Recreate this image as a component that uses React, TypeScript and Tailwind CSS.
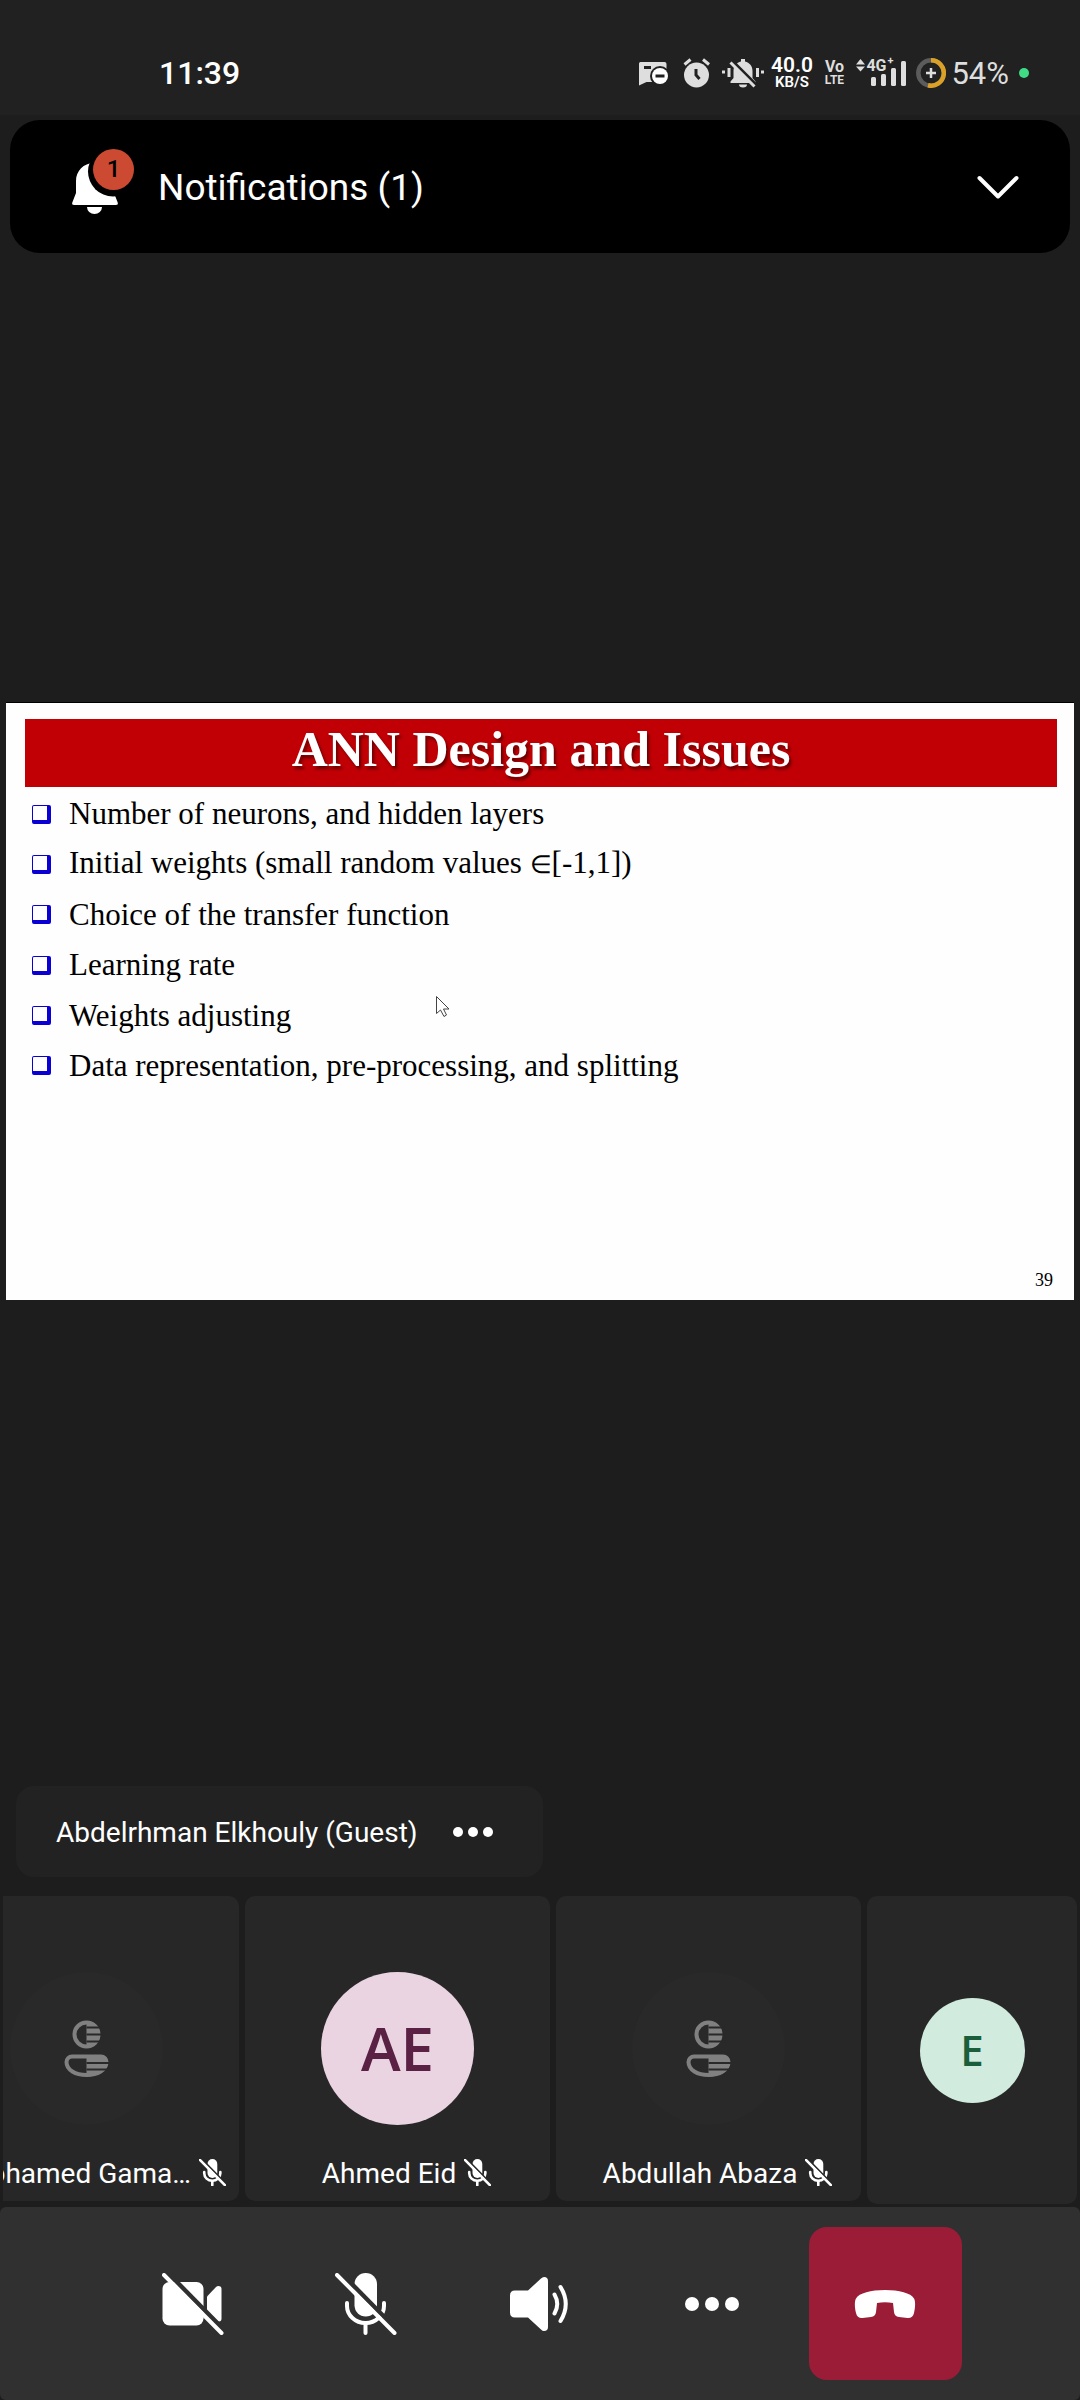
import React from 'react';

const SLIDE_POINTS = [
  'Number of neurons, and hidden layers',
  'Initial weights (small random values ∈[-1,1])',
  'Choice of the transfer function',
  'Learning rate',
  'Weights adjusting',
  'Data representation, pre-processing, and splitting',
];

function StatusIcons() {
  return (
    <div className="flex items-center text-[#dedede]">
      <svg className="mr-[14px] h-[30px] w-[30px]" viewBox="0 0 30 30" fill="currentColor" aria-hidden="true">
        <path d="M1.500 4h24a2 2 0 0 1 2 2v18H7.500L0 27.500V5.500A1.500 1.500 0 0 1 1.500 4z" />
        <rect x="5" y="8" width="7" height="3" fill="#212121" />
        <circle cx="21" cy="18" r="10" fill="#212121" />
        <circle cx="21" cy="18" r="8" fill="#fff" />
        <rect x="16.500" y="16.500" width="9" height="3" fill="#212121" />
      </svg>
      <svg className="mr-[11px] h-[30px] w-[28px]" viewBox="0 0 28 30" aria-hidden="true">
        <circle cx="13.500" cy="17" r="12.500" fill="currentColor" />
        <path d="M1.500 6.500 7.500 1.500M26 6.500l-6-5" stroke="currentColor" strokeWidth="3" />
        <path d="M13 11v6l3.500 4" stroke="#212121" strokeWidth="3" fill="none" />
      </svg>
      <svg className="mr-[7px] h-[30px] w-[42px]" viewBox="0 0 42 30" fill="currentColor" aria-hidden="true">
        <path d="M19 3.500V1h4v2.500c4.500 1 7.500 4.500 7.500 9.500v7l3 3.500V25H8.500v-1.500l3-3.500v-7c0-5 3-8.500 7.500-9.500z" />
        <path d="M17 26.500h8a4 3 0 0 1-8 0z" />
        <path d="M1.500 12.500v3M7 10v9M35.500 10v9M40.500 12.500v3" stroke="currentColor" strokeWidth="3" />
        <path d="M11 3.500l24 24" stroke="#212121" strokeWidth="3" />
        <path d="M8.500 4.500l24 24" stroke="currentColor" strokeWidth="3" />
      </svg>
      <div className="mr-3 flex w-[41px] flex-col items-center text-white">
        <span className="text-[21px] font-semibold leading-[19px]">40.0</span>
        <span className="text-[15px] font-semibold leading-[15px]">KB/S</span>
      </div>
      <div className="mr-[11px] flex w-[20px] flex-col items-center font-bold">
        <span className="text-[16px] leading-[14px]">Vo</span>
        <span className="text-[12px] leading-[12px]">LTE</span>
      </div>
      <div className="relative mr-2 h-[30px] w-[53px]">
        <svg className="h-full w-full" viewBox="0 0 53 30" fill="currentColor" aria-hidden="true">
          <path d="M1 6.500 5.500 1 10 6.500zM1 8.500l4.500 5L10 8.500z" />
          <rect x="16" y="19" width="5" height="9" rx="1.500" />
          <rect x="26" y="16" width="5" height="12" rx="1.500" />
          <rect x="36" y="10" width="5" height="18" rx="1.500" />
          <rect x="46" y="3" width="5" height="25" rx="1.500" />
        </svg>
        <span className="absolute left-[11px] top-0 text-[16px] font-bold leading-[16px]">4G</span>
        <span className="absolute left-[32px] top-[-3px] text-[11px] font-bold leading-[11px]">+</span>
      </div>
      <svg className="mr-[5px] h-[30px] w-[30px]" viewBox="0 0 30 30" fill="none" aria-hidden="true">
        <circle cx="15" cy="15" r="12.700" stroke="#5c5c5c" strokeWidth="4.500" />
        <path d="M15 2.300a12.700 12.700 0 1 1-3 25" stroke="#dba126" strokeWidth="4.500" />
        <path d="M15 10v10M10 15h10" stroke="#dedede" strokeWidth="2.500" />
      </svg>
      <span className="text-[31px] leading-[31px]">54%</span>
      <span className="ml-[10px] h-[10px] w-[10px] rounded-full bg-[#3fdc85]" />
    </div>
  );
}

function MicOff({ className, weight = 4 }: { className: string; weight?: number }) {
  return (
    <svg className={className} viewBox="0 0 62 62" fill="none" aria-hidden="true">
      <rect x="19.500" y="0" width="22.500" height="43.500" rx="11.200" fill="#fff" />
      <path d="M12 30v3a18.500 17 0 0 0 37 0v-3" stroke="#fff" strokeWidth={weight} strokeLinecap="round" />
      <path d="M30.500 51v9" stroke="#fff" strokeWidth={weight} strokeLinecap="round" />
      <path d="M7.500 1.500 65 60" className="stroke-(--surface)" strokeWidth="4.500" />
      <path d="M2 2 59.500 60" stroke="#fff" strokeWidth={weight} strokeLinecap="round" />
    </svg>
  );
}

function PersonGlyph() {
  return (
    <svg className="h-[57px] w-[45px]" viewBox="0 0 45 57" fill="none" aria-hidden="true">
      <circle cx="22.500" cy="14.500" r="12" stroke="#808080" strokeWidth="4" />
      <path d="M8 36.500h29a5.500 5.500 0 0 1 5.500 5.500c0 8-9 13-20 13s-20-5-20-13A5.500 5.500 0 0 1 8 36.500z" stroke="#808080" strokeWidth="4" />
      <path d="M22.500 1a13.500 13.500 0 0 1 0 27z" fill="#808080" />
      <path d="M22.500 35H37a7 7 0 0 1 7 7c0 9-10 14.500-21.500 14.500z" fill="#808080" />
      <path d="M22.500 7.500H40M22.500 14.500H40M22.500 21.500H40M22.500 43H45M22.500 49.500H45" stroke="#292929" strokeWidth="2" />
    </svg>
  );
}

function Tile({ name, children }: { name: string; children: React.ReactNode }) {
  return (
    <li className="flex h-[305px] w-[305px] shrink-0 flex-col items-center rounded-[10px] bg-[#272727] pt-[76px] [--surface:#272727]">
      {children}
      <div className="mt-[29px] flex max-w-full items-center gap-2 pl-[18px] text-[28px] leading-[40px] text-white">
        <span className="whitespace-nowrap">{name}</span>
        <MicOff className="mb-1 h-[27px] w-[27px] shrink-0" weight={6} />
      </div>
    </li>
  );
}

const actionClass = 'flex h-[153px] w-[153px] items-center justify-center rounded-[18px]';

export default function App() {
  return (
    <div className="flex min-h-screen flex-col overflow-hidden bg-[#1d1d1d] font-['Roboto',sans-serif]">
      <header className="flex h-[115px] items-center justify-between bg-[#212121] pl-[159px] pr-[51px] pt-[31px]">
        <time className="text-[32px] font-medium leading-[32px] text-white">11:39</time>
        <StatusIcons />
      </header>

      <button type="button" className="mx-[10px] mt-[5px] flex h-[133px] items-center rounded-[30px] bg-black pl-[61px] pr-[51px] text-white">
        <span className="relative mr-[39px] h-[64px] w-[48px]">
          <svg className="h-full w-full" viewBox="0 0 48 64" fill="#fff" aria-hidden="true">
            <path d="M23 8C12.500 8 5 16 5 26v12L1.300 47.500C.700 49.200 1.600 50 3 50h42c1.400 0 2.300-.800 1.700-2.500L43 38V26C43 16 34 8 23 8z" />
            <path d="M16 52h15a7.500 7 0 0 1-15 0z" />
            <circle cx="42" cy="16.500" r="25" fill="#000" />
          </svg>
          <span className="absolute left-[22px] top-[-6px] flex h-[41px] w-[41px] items-center justify-center rounded-full bg-[#cc4a31] text-[24px] font-medium leading-[24px] text-black">1</span>
        </span>
        <span className="pt-[3px] text-[37px] leading-[48px]">Notifications (1)</span>
        <svg className="ml-auto h-[24px] w-[42px]" viewBox="0 0 42 24" fill="none" stroke="#fff" strokeWidth="4" strokeLinecap="round" strokeLinejoin="round" aria-label="Expand">
          <path d="M2.500 3 21 21.500 39.500 3" />
        </svg>
      </button>

      <main className="flex flex-1 flex-col">
        <section className="relative mx-[6px] mt-[449px] flex h-[598px] flex-col border-t border-black bg-[#fefefe] pl-[19px] pr-[17px] pt-[16px] font-['Liberation_Serif',serif] text-black">
          <h1 className="h-[68px] bg-[#c10005] text-center text-[50px] font-bold leading-[60px] text-white [text-shadow:2px_3px_3px_rgba(60,0,0,0.7)]">
            ANN Design and Issues
          </h1>
          <ul className="mt-[2px] flex h-[302px] flex-col justify-between pl-[7px]">
            {SLIDE_POINTS.map((point) => (
              <li key={point} className="flex h-[50px] items-center gap-[18px] text-[31px] leading-[50px]">
                <span className="h-[19px] w-[19px] rounded-[2px] border-b-4 border-l border-r-4 border-t border-[#0a00d4]" />
                <span>
                  {point.split(/(∈)/).map((part, i) =>
                    part === '∈' ? (
                      <span key={i} className="text-[25px]">∈</span>
                    ) : (
                      part
                    ),
                  )}
                </span>
              </li>
            ))}
          </ul>
          <span className="mb-[8px] ml-auto mr-[4px] mt-auto text-[18px] leading-[24px]">39</span>
          <svg className="absolute left-[429px] top-[292px] h-[24px] w-[16px]" viewBox="0 0 16 24" fill="#fff" stroke="#444" strokeWidth="1" aria-hidden="true">
            <path d="M1.500 1.500v17l4-3.500 3.500 6.500 2.500-1.500-3-6H14z" />
          </svg>
        </section>

        <div className="ml-[16px] mt-auto flex h-[91px] w-fit items-center rounded-[18px] bg-[#222] pl-[40px] pr-[50px] text-[28px] text-white">
          <span className="pt-[2px]">Abdelrhman Elkhouly (Guest)</span>
          <button type="button" aria-label="Presenter options" className="ml-[35px] flex gap-[5px]">
            <span className="h-[10px] w-[10px] rounded-full bg-white" />
            <span className="h-[10px] w-[10px] rounded-full bg-white" />
            <span className="h-[10px] w-[10px] rounded-full bg-white" />
          </button>
        </div>

        <div className="mx-[3px] mb-[3px] mt-[19px] overflow-hidden">
          <ul className="-ml-[69px] flex gap-[6px]">
            <Tile name="Mohamed Gama…">
              <div className="flex h-[153px] w-[153px] items-center justify-center rounded-full bg-[#292929]"><PersonGlyph /></div>
            </Tile>
            <Tile name="Ahmed Eid">
              <div className="flex h-[153px] w-[153px] items-center justify-center rounded-full bg-[#ead4e1] pb-[2px] font-['Open_Sans',sans-serif] text-[60px] font-semibold text-[#5a2145]">AE</div>
            </Tile>
            <Tile name="Abdullah Abaza">
              <div className="flex h-[153px] w-[153px] items-center justify-center rounded-full bg-[#292929]"><PersonGlyph /></div>
            </Tile>
            <li className="flex h-[308px] flex-1 items-center justify-center rounded-[10px] bg-[#272727]">
              <div className="flex h-[105px] w-[105px] items-center justify-center rounded-full bg-[#d1ebde] pb-[2px] font-['Open_Sans',sans-serif] text-[42px] font-semibold text-[#1b5e3b]">E</div>
            </li>
          </ul>
        </div>
      </main>

      <nav aria-label="Call controls" className="flex h-[193px] items-center justify-center gap-[20px] rounded-[6px] bg-[#303030] pr-[2px] [--surface:#303030]">
        <button type="button" aria-label="Turn camera on" className={actionClass}>
          <svg className="h-[62px] w-[62px]" viewBox="0 0 62 62" fill="none" aria-hidden="true">
            <rect x="0.500" y="9" width="41" height="43.500" rx="7" fill="#fff" />
            <path d="M45 23.500 54 14q1-1 2.500-1 3 0 3 3v29.500q0 3-2.500 3-1 0-2-1L45 37.500z" fill="#fff" />
            <path d="M7.500 1.500 65 60" className="stroke-(--surface)" strokeWidth="4.500" />
            <path d="M2 2 59.500 60" stroke="#fff" strokeWidth="4" strokeLinecap="round" />
          </svg>
        </button>
        <button type="button" aria-label="Unmute" className={actionClass}>
          <MicOff className="h-[62px] w-[62px]" />
        </button>
        <button type="button" aria-label="Audio device" className={actionClass}>
          <svg className="h-[60px] w-[60px]" viewBox="0 0 60 60" fill="#fff" aria-hidden="true">
            <path d="M6 16.500h13L32 4.500q1.500-1.500 3-1.500 4 0 4 4v46q0 4-4 4-1.500 0-3-1.500L19 43.500H6q-5 0-5-5v-17q0-5 5-5z" />
            <path d="M45.500 20.500q5.500 9.500 0 19M51.500 13q10.500 17 0 34" fill="none" stroke="#fff" strokeWidth="4" strokeLinecap="round" />
          </svg>
        </button>
        <button type="button" aria-label="More options" className={actionClass}>
          <span className="flex gap-[6px]">
            <span className="h-[14px] w-[14px] rounded-full bg-white" />
            <span className="h-[14px] w-[14px] rounded-full bg-white" />
            <span className="h-[14px] w-[14px] rounded-full bg-white" />
          </span>
        </button>
        <button type="button" aria-label="Hang up" className="flex h-[153px] w-[153px] items-center justify-center rounded-[18px] bg-[#9b1c37]">
          <svg className="h-[30px] w-[62px]" viewBox="0 0 62 30" fill="#fff" aria-hidden="true">
            <path d="M31 1C17 1 5 4 2 9.500.500 12 .500 18 2 24c.800 3.500 3 5.300 6.500 5L17 28c3-.400 4.700-2 5-5l1-9q8-1.500 16 0l1 9c.300 3 2 4.600 5 5l8.500 1c3.500.300 5.700-1.500 6.500-5 1.500-6 1.500-12 0-14.500C57 4 45 1 31 1z" />
          </svg>
        </button>
      </nav>
    </div>
  );
}
